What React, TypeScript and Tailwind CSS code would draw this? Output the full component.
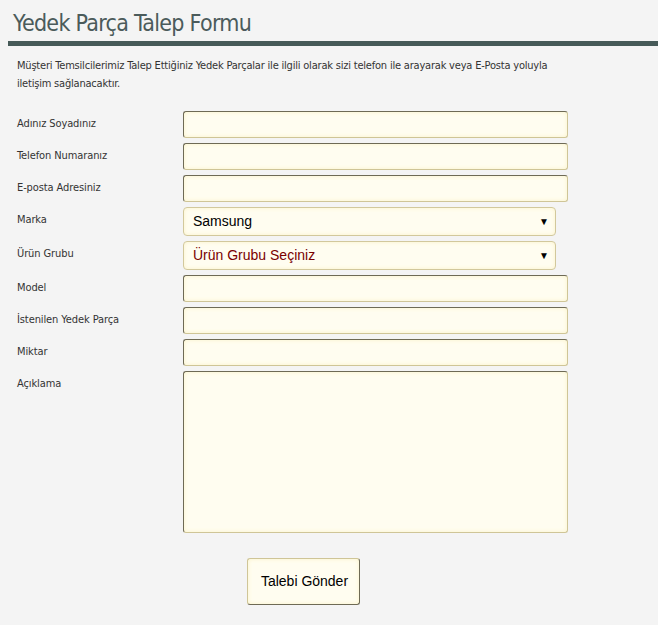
import React from 'react';

const narrow = { fontFamily: '"Liberation Sans Narrow", "DejaVu Sans Condensed", "Liberation Sans", sans-serif' };

const inputCls =
  'block h-[27px] w-[385px] rounded-[3px] border border-t-[#6e6a55] border-l-[#6e6a55] border-b-[#cfc597] border-r-[#cfc597] bg-[#fffdf0] shadow-[inset_0_0_4px_#fbf3c8] outline-none';

const selectCls =
  'relative flex h-[29px] w-[373px] items-center rounded-[4px] border border-[#d2c89c] bg-[#fffdf0] pl-[9px] text-[14px] shadow-[inset_0_0_4px_#fbf3c8]';

const Label: React.FC<{ text: string }> = ({ text }) => (
  <div className="w-[166px] shrink-0 pt-[4px] text-[11px] leading-[18px] tracking-[-0.1px] text-[#333]" style={narrow}>
    {text}
  </div>
);

const Row: React.FC<{ label: string; children: React.ReactNode }> = ({ label, children }) => (
  <div className="flex items-start">
    <Label text={label} />
    {children}
  </div>
);

const Select: React.FC<{ value: string; red?: boolean }> = ({ value, red }) => (
  <div className={selectCls} style={{ fontFamily: '"Liberation Sans", Arial, sans-serif' }}>
    <span className={red ? 'text-[#7a0000]' : 'text-black'}>{value}</span>
    <span className="absolute right-[6px] top-[6px] text-[10px] text-black">▼</span>
  </div>
);

export default function App() {
  return (
    <div className="min-h-[625px] w-[658px] bg-[#f4f4f4] pt-[7px] pl-[8px]">
      <h1 className="pl-[5px] text-[23px] leading-[32px] tracking-[-0.7px] text-[#4b5b5b]" style={narrow}>
        Yedek Parça Talep Formu
      </h1>
      <div className="mt-[2px] h-[5px] w-full bg-[#465a58]" />
      <p className="mt-[11px] w-[565px] pl-[9px] text-[11px] leading-[18px] tracking-[-0.2px] text-[#333]" style={narrow}>
        Müşteri Temsilcilerimiz Talep Ettiğiniz Yedek Parçalar ile ilgili olarak sizi telefon ile arayarak veya E-Posta yoluyla
        iletişim sağlanacaktır.
      </p>

      <div className="mt-[18px] flex flex-col gap-[5px] pl-[9px]">
        <Row label="Adınız Soyadınız">
          <input className={inputCls} />
        </Row>
        <Row label="Telefon Numaranız">
          <input className={inputCls} />
        </Row>
        <Row label="E-posta Adresiniz">
          <input className={inputCls} />
        </Row>
        <Row label="Marka">
          <Select value="Samsung" />
        </Row>
        <Row label="Ürün Grubu">
          <Select value="Ürün Grubu Seçiniz" red />
        </Row>
        <Row label="Model">
          <input className={inputCls} />
        </Row>
        <Row label="İstenilen Yedek Parça">
          <input className={inputCls} />
        </Row>
        <Row label="Miktar">
          <input className={inputCls} />
        </Row>
        <Row label="Açıklama">
          <textarea className={inputCls + ' h-[162px] resize-none border-[#d2c89c]'} />
        </Row>
      </div>

      <div className="mt-[25px] pl-[239px]">
        <button
          className="h-[47px] w-[113px] rounded-[3px] border border-t-[#cfc597] border-l-[#cfc597] border-b-[#6e6a55] border-r-[#6e6a55] bg-[#fffdf0] pl-[2px] text-[14px] text-black shadow-[inset_0_0_4px_#fbf3c8]"
          style={{ fontFamily: '"Liberation Sans", Arial, sans-serif' }}
        >
          Talebi Gönder
        </button>
      </div>
    </div>
  );
}
